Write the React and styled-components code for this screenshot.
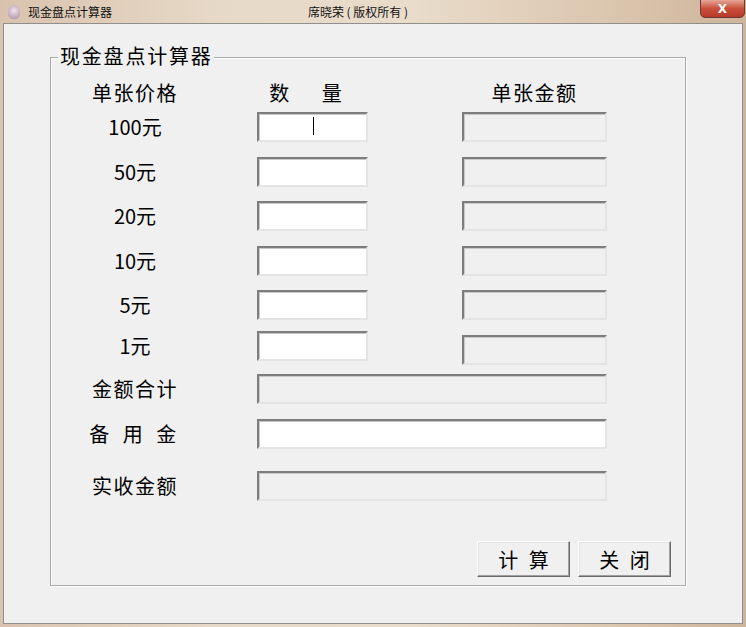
import React from "react";
import styled, { createGlobalStyle } from "styled-components";

const Global = createGlobalStyle`
  html, body { margin: 0; padding: 0; }
  body { width: 746px; height: 627px; overflow: hidden; font-family: "Noto Sans CJK SC", "Noto Sans", sans-serif; }
`;

const Frame = styled.div`
  width: 746px; height: 627px; box-sizing: border-box;
  background: linear-gradient(90deg, #d9c3ae 0%, #e7d9c8 30%, #e9dccb 55%, #dcc7b0 80%, #cdb59b 100%);
  display: flex; flex-direction: column; padding: 0 3px 3px 3px;
`;
const TitleBar = styled.div`
  height: 23px; display: flex; align-items: center; position: relative;
  font-size: 12px; color: #111;
`;
const AppIcon = styled.div`
  width: 12px; height: 14px; margin: 0 8px 0 5px; border-radius: 50% 50% 40% 40%;
  background: radial-gradient(circle at 50% 40%, #f2e3ef, #a58aa0);
`;
const CenterTitle = styled.div`
  position: absolute; left: 0; right: 0; text-align: center; top: 3px; pointer-events: none;
  padding-right: 30px;
`;
const Close = styled.div`
  position: absolute; right: -2px; top: -1px; width: 45px; height: 19px;
  border: 1px solid #6b3a30; border-radius: 0 0 5px 5px; box-sizing: border-box;
  background: linear-gradient(#e8a796, #c8503a 50%, #b8382a);
  color: #fff; font: bold 12px "DejaVu Sans", sans-serif; display: flex; align-items: center; justify-content: center;
`;
const Client = styled.div`
  flex: 1; background: #f0f0f0; border: 1px solid #8f8f8f; padding: 33px 0 0 46px; box-sizing: border-box;
`;
const Group = styled.div`
  position: relative; width: 636px; height: 529px; box-sizing: border-box;
  border: 1px solid #a8a8a8; box-shadow: inset 1px 1px 0 #fff, 1px 1px 0 #fff;
  padding: 22px 14px 0 0; display: flex; flex-direction: column;
`;
const Legend = styled.div`
  position: absolute; left: 7px; top: -15px; background: #f0f0f0; padding: 0 1px 0 2px;
  font-size: 20px; letter-spacing: 1.8px; line-height: 26px; color: #000;
`;
const Row = styled.div`
  display: flex; align-items: flex-start; height: ${p => p.$h}px;
`;
const Label = styled.div`
  width: 168px; text-align: center; font-size: 20px; color: #000; line-height: 30px;
  letter-spacing: ${p => p.$ls ?? 1.5}px;
`;
const Head = styled.div`
  width: ${p => p.$w}px; margin-left: ${p => p.$ml || 0}px; text-align: center; font-size: 20px; line-height: 26px;
  letter-spacing: ${p => p.$ls ?? 1.5}px;
`;
const Box = styled.div`
  width: ${p => p.$w}px; height: 30px; margin-left: ${p => p.$ml}px; margin-top: ${p => p.$mt || 0}px;
  box-sizing: border-box; position: relative;
  background: ${p => (p.$white ? "#fff" : "#f0f0f0")};
  border: 2px solid; border-color: #7d7d7d #e4e4e4 #e4e4e4 #7d7d7d;
  box-shadow: inset 1px 1px 0 #c8c8c8;
`;
const Caret = styled.div`
  position: absolute; left: 54px; top: 3px; width: 1px; height: 18px; background: #000;
`;
const Buttons = styled.div`
  margin-top: auto; margin-bottom: 8px; display: flex; justify-content: flex-end; gap: 8px;
`;
const Btn = styled.div`
  width: 93px; height: 36px; box-sizing: border-box; display: flex; align-items: center; justify-content: center;
  background: #f0f0f0; font-size: 20px; letter-spacing: 3px; padding-left: 3px;
  border: 1px solid; border-color: #fff #696969 #696969 #fff;
  box-shadow: inset -1px -1px 0 #a0a0a0, inset 1px 1px 0 #e3e3e3;
`;

const rows = [
  ["100元", 45, 0],
  ["50元", 44, 0],
  ["20元", 45, 0],
  ["10元", 44, 0],
  ["5元", 41, 0],
  ["1元", 43, 4],
];

export default function App() {
  return (
    <>
      <Global />
      <Frame>
        <TitleBar>
          <AppIcon />
          现金盘点计算器
          <CenterTitle>席晓荣 ( 版权所有 )</CenterTitle>
          <Close>X</Close>
        </TitleBar>
        <Client>
          <Group>
            <Legend>现金盘点计算器</Legend>
            <Row $h={32}>
              <Head $w={168}>单张价格</Head>
              <Head $w={111} $ml={38} $ls={14}>数 量</Head>
              <Head $w={145} $ml={94}>单张金额</Head>
            </Row>
            {rows.map(([l, h, mt], i) => (
              <Row $h={h} key={l}>
                <Label $ls={0}>{l}</Label>
                <Box $w={111} $ml={38} $white>{i === 0 && <Caret />}</Box>
                <Box $w={145} $ml={94} $mt={mt} />
              </Row>
            ))}
            <Row $h={45}>
              <Label>金额合计</Label>
              <Box $w={350} $ml={38} />
            </Row>
            <Row $h={52}>
              <Label $ls={4.5}>备 用 金</Label>
              <Box $w={350} $ml={38} $white />
            </Row>
            <Row $h={50}>
              <Label>实收金额</Label>
              <Box $w={350} $ml={38} />
            </Row>
            <Buttons>
              <Btn>计 算</Btn>
              <Btn>关 闭</Btn>
            </Buttons>
          </Group>
        </Client>
      </Frame>
    </>
  );
}
